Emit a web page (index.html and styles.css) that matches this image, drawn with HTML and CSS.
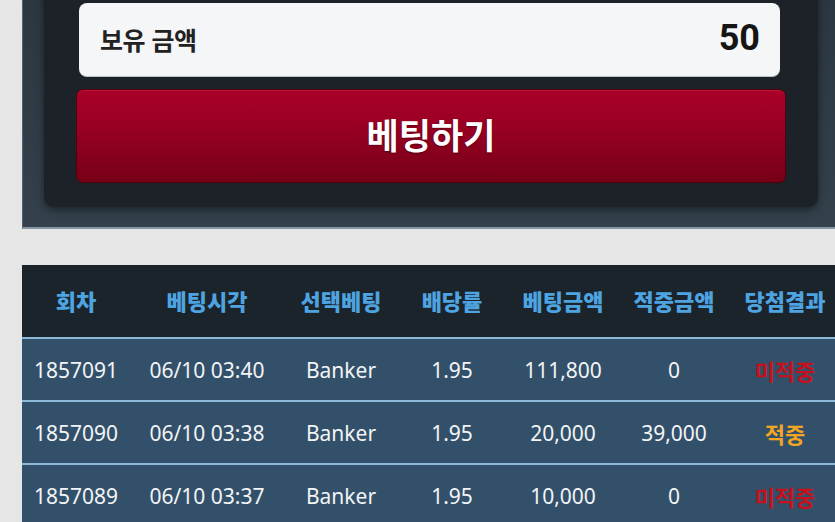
FILE: index.html
```html
<!DOCTYPE html>
<html lang="ko">
<head>
<meta charset="utf-8">
<title>베팅</title>
<link rel="stylesheet" href="styles.css">
</head>
<body>
<div class="page">
  <section class="panel">
    <div class="inner">
      <div class="balance">
        <span class="balance-label">보유 금액</span>
        <span class="balance-value">50</span>
      </div>
      <button class="bet-btn">베팅하기</button>
    </div>
  </section>

  <table class="history">
    <colgroup>
      <col class="c1"><col class="c2"><col class="c3"><col class="c4"><col class="c5"><col class="c6"><col class="c7">
    </colgroup>
    <thead>
      <tr>
        <th>회차</th><th>베팅시각</th><th>선택베팅</th><th>배당률</th><th>베팅금액</th><th>적중금액</th><th>당첨결과</th>
      </tr>
    </thead>
    <tbody>
      <tr>
        <td>1857091</td><td>06/10 03:40</td><td>Banker</td><td>1.95</td><td>111,800</td><td>0</td><td class="lose">미적중</td>
      </tr>
      <tr>
        <td>1857090</td><td>06/10 03:38</td><td>Banker</td><td>1.95</td><td>20,000</td><td>39,000</td><td class="win">적중</td>
      </tr>
      <tr>
        <td>1857089</td><td>06/10 03:37</td><td>Banker</td><td>1.95</td><td>10,000</td><td>0</td><td class="lose">미적중</td>
      </tr>
    </tbody>
  </table>
</div>
</body>
</html>
```

FILE: styles.css
```css
html, body {
  margin: 0;
  padding: 0;
}
body {
  background: #e6e6e6;
  width: 835px;
  height: 522px;
  overflow: hidden;
  font-family: "Noto Sans", "Noto Sans CJK KR", sans-serif;
}
.page {
  width: 835px;
  overflow: hidden;
}
.panel {
  margin-left: 22px;
  width: 840px;
  height: 227px;
  background: linear-gradient(#2b3741, #34414c);
  border-left: 1px solid #55636f;
  border-bottom: 2px solid #8796a3;
  box-sizing: content-box;
  overflow: hidden;
}
.inner {
  margin-left: 21px;
  margin-top: -30px;
  width: 774px;
  height: 237px;
  box-sizing: border-box;
  background: #1c2227;
  border-radius: 10px;
  box-shadow: 0 3px 8px rgba(0,0,0,0.45);
  padding: 30px 32px 0 32px;
  display: flex;
  flex-direction: column;
  gap: 12px;
  border-top: 3px solid #172030;
}
.balance {
  margin: 0 6px 0 3px;
  height: 74px;
  background: #f5f6f7;
  border-radius: 8px;
  border-bottom: 1px solid #b9c4cf;
  box-sizing: border-box;
  display: flex;
  align-items: center;
  justify-content: space-between;
  padding: 0 20px 0 21px;
}
.balance-label {
  font-family: "Noto Sans CJK KR", sans-serif;
  font-weight: 700;
  font-size: 25px;
  color: #222;
  letter-spacing: -0.5px;
  margin-top: -2px;
}
.balance-value {
  font-family: Roboto, "Noto Sans", sans-serif;
  font-weight: 700;
  font-size: 36px;
  color: #151515;
  margin-top: -4px;
}
.bet-btn {
  height: 94px;
  border: 1px solid #4e000e;
  border-radius: 7px;
  background: linear-gradient(#aa0029, #960022 45%, #760016);
  color: #fff;
  font-family: "Noto Sans CJK KR", sans-serif;
  font-weight: 700;
  font-size: 35px;
  text-shadow: 0 1px 2px rgba(0,0,0,0.4);
  box-shadow: inset 0 1px 0 rgba(255,80,100,0.25);
  padding: 0 0 6px 0;
  cursor: pointer;
}
.history {
  margin-top: 36px;
  margin-left: 22px;
  border-collapse: collapse;
  table-layout: fixed;
  width: 820px;
}
.c1 { width: 108px; }
.c2 { width: 154px; }
.c3 { width: 114px; }
.c4 { width: 108px; }
.c5 { width: 114px; }
.c6 { width: 108px; }
.c7 { width: 114px; }
.history thead tr {
  background: #1b232b;
  height: 73px;
}
.history th {
  font-family: "Noto Sans CJK KR", sans-serif;
  font-weight: 900;
  font-size: 22px;
  color: #4ea4e0;
  padding: 0 0 3px 0;
  white-space: nowrap;
}
.history tbody tr {
  background: #33506a;
  height: 63px;
  border-top: 2px solid #8db7d7;
}
.history td {
  text-align: center;
  font-size: 21px;
  color: #f2f4f6;
  padding: 0;
  white-space: nowrap;
}
.history td.lose {
  font-family: "Noto Sans CJK KR", sans-serif;
  color: #c8101c;
  font-weight: 700;
  font-size: 22px;
}
.history td.win {
  font-family: "Noto Sans CJK KR", sans-serif;
  color: #f2a623;
  font-weight: 700;
  font-size: 22px;
}
```
